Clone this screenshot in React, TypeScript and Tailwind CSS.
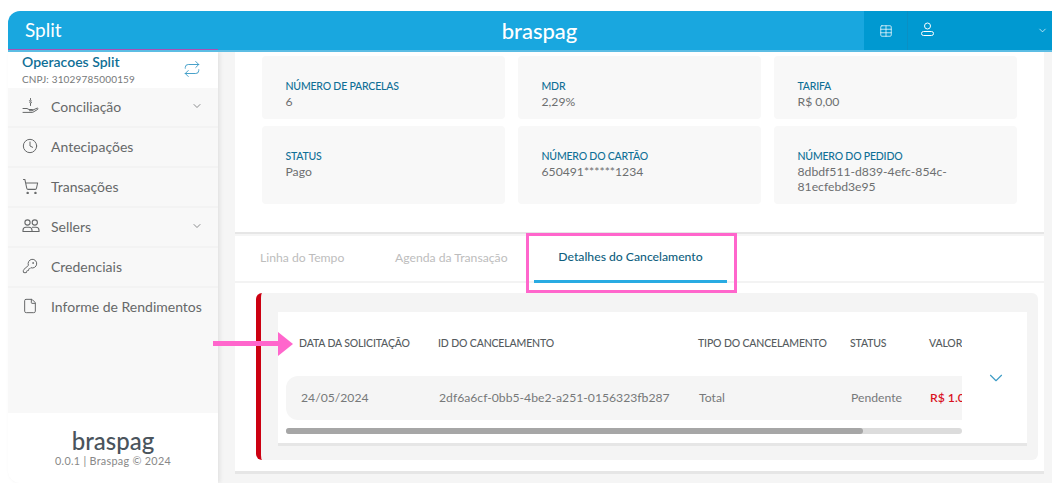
import { ChevronDown, Clock, File, Repeat, ShoppingCart, Table, KeyRound } from 'lucide-react';
import type { ReactNode } from 'react';

const font = "font-['Lato','Noto_Sans',sans-serif]";

function HandIcon() {
    return (
        <svg width="18" height="18" viewBox="0 0 18 18" fill="none" stroke="currentColor" strokeWidth="1" strokeLinecap="round" strokeLinejoin="round">
            <path d="M1 11.5h4l2 1h3.5c.8 0 .8 1.2 0 1.2H7.5" />
            <path d="M10.5 13.2l4.5-2c1-.3 1.5.7.7 1.2l-5 3H1" />
            <path d="M8.5 1.5v1M7.5 5.5c0 .6 2 .9 2 0s-2-.8-2-1.700 2-.7 2-.1M8.500 6.500v2" />
        </svg>
    );
}

function PeopleIcon() {
    return (
        <svg width="18" height="18" viewBox="0 0 18 18" fill="none" stroke="currentColor" strokeWidth="1.1">
            <circle cx="5.500" cy="5.500" r="2.600" />
            <circle cx="12.800" cy="5.500" r="2.600" />
            <path d="M1 14.500v-1.200c0-1.700 1.300-3 3-3h3c1.700 0 3 1.300 3 3v1.200z" />
            <path d="M10 10.300h4c1.700 0 3 1.300 3 3v1.200h-7" />
        </svg>
    );
}

function MenuItem({ icon, label, chevron }: { icon: ReactNode; label: string; chevron?: boolean }) {
    return (
        <div className="flex h-10 items-center border-b-2 border-[#f3f3f3] pr-[15px] pb-[2px] pl-[14px] text-[#666869] last:border-transparent">
            <span className="flex w-[29px] shrink-0 items-center">{icon}</span>
            <span className="flex-1 text-[14px] whitespace-nowrap">{label}</span>
            {chevron && <ChevronDown size={12} strokeWidth={1.5} />}
        </div>
    );
}

function Sidebar() {
    return (
        <aside className="relative z-10 flex w-[210px] shrink-0 flex-col rounded-bl-xl bg-[#f8f8f8] shadow-[2px_0_4px_rgba(0,0,0,0.08)]">
            <div className="flex h-[36px] items-center justify-between bg-white pr-[17px] pl-[14px]">
                <div className="-mt-[1px]">
                    <div className="text-[14px] leading-[16px] font-semibold text-[#0f6f96]">Operacoes Split</div>
                    <div className="mt-[3px] text-[10px] leading-[13px] tracking-[0.15px] text-[#77797a]">CNPJ: 31029785000159</div>
                </div>
                <Repeat size={18} strokeWidth={1.25} className="mb-[3px] text-[#3d9cc6]" />
            </div>
            <div>
                <MenuItem icon={<HandIcon />} label="Conciliação" chevron />
                <MenuItem icon={<Clock size={16} strokeWidth={1.5} />} label="Antecipações" />
                <MenuItem icon={<ShoppingCart size={17} strokeWidth={1.5} />} label="Transações" />
                <MenuItem icon={<PeopleIcon />} label="Sellers" chevron />
                <MenuItem icon={<KeyRound size={16} strokeWidth={1.5} />} label="Credenciais" />
                <MenuItem icon={<File size={16} strokeWidth={1.5} />} label="Informe de Rendimentos" />
            </div>
            <div className="flex-1" />
            <div className="flex h-[70px] flex-col items-center rounded-bl-xl bg-white pt-[15px]">
                <div className="text-[24px] leading-[26px] font-medium text-[#4a545c]">braspag</div>
                <div className="text-[10.8px] leading-[13px] tracking-[0.3px] text-[#888]">0.0.1 | Braspag © 2024</div>
            </div>
        </aside>
    );
}

function Tile({ label, value, className }: { label: string; value: string; className: string }) {
    return (
        <div className={`rounded bg-[#f8f8f8] pr-[40px] pl-[23.5px] ${className}`}>
            <div className="text-[10.5px] leading-[14px] font-medium tracking-[-0.2px] text-[#0f6f96]">{label}</div>
            <div className="mt-[1px] text-[12.2px] leading-[15px] text-[#6d6f70]">{value}</div>
        </div>
    );
}

function Header() {
    return (
        <header className="relative z-20 flex h-[41px] shrink-0 items-stretch overflow-hidden rounded-tl-xl border-b-[2px] border-[#5cbde4] bg-[#19a7df] text-white">
            <div className="-mb-[2px] flex w-[210px] items-center border-b-[3px] border-[#a84fb5] pl-[17px] text-[19px]">Split</div>
            <div className="flex flex-1 items-center justify-center">
                <span className="ml-[-3px] text-[22px] font-medium">braspag</span>
            </div>
            <div className="flex w-[188px] bg-[#0099d1]">
                <div className="flex w-[44px] items-center justify-center border-r border-[#0a90c4]">
                    <Table size={14} strokeWidth={1.25} />
                </div>
                <div className="flex flex-1 items-center pb-[2px] pl-[12px]">
                    <svg width="15" height="15" viewBox="0 0 15 15" fill="none" stroke="currentColor" strokeWidth="1">
                        <circle cx="7.500" cy="4" r="3" />
                        <rect x="1.500" y="9.500" width="12" height="4" rx="2" />
                    </svg>
                </div>
                <div className="flex w-[20px] items-center justify-center">
                    <ChevronDown size={11} strokeWidth={1.5} />
                </div>
            </div>
        </header>
    );
}

function Tabs() {
    return (
        <div className="flex h-[47px] items-stretch border-b-2 border-[#f3f3f3] text-[12.2px]">
            <div className="ml-[25px] flex w-[135px] items-center text-[#bdbdbd]">Linha do Tempo</div>
            <div className="flex w-[139px] items-center text-[#bdbdbd]">Agenda da Transação</div>
            <div className="-mb-[2px] flex w-[193px] items-center justify-center border-b-[3px] border-[#29abe2] pb-[2px] font-medium text-[#0f5f80]">
                Detalhes do Cancelamento
            </div>
        </div>
    );
}

function CancelTable() {
    return (
        <div className="flex h-[131px] bg-white pl-[8px] shadow-[0_3px_0_#e6e6e6]">
            <div className="w-[676px] shrink-0 overflow-hidden">
                <div className="w-[900px]">
                    <div className="flex h-[64px] items-end pb-[26px] text-[10.5px] leading-[13px] font-medium tracking-[-0.15px] text-[#555b5e]">
                        <span className="ml-[13px] w-[139px]">DATA DA SOLICITAÇÃO</span>
                        <span className="w-[260px]">ID DO CANCELAMENTO</span>
                        <span className="w-[152px]">TIPO DO CANCELAMENTO</span>
                        <span className="w-[79px]">STATUS</span>
                        <span>VALOR</span>
                    </div>
                    <div className="flex h-[44px] items-center rounded-l-xl bg-[#f5f5f5] text-[12.2px] text-[#77797a]">
                        <span className="ml-[15px] w-[138px]">24/05/2024</span>
                        <span className="w-[260px]">2df6a6cf-0bb5-4be2-a251-0156323fb287</span>
                        <span className="w-[152px]">Total</span>
                        <span className="w-[79px]">Pendente</span>
                        <span className="font-semibold text-[#d9121f]">R$ 1.000,00</span>
                    </div>
                </div>
                <div className="mt-[8px] h-[6px] rounded-full bg-[#dcdcdc]">
                    <div className="h-full w-[577px] rounded-full bg-[#a6a6a6]" />
                </div>
            </div>
            <div className="flex flex-1 justify-start pt-[55px] pl-[23px]">
                <ChevronDown size={22} strokeWidth={1.25} className="text-[#3d9cc6]" />
            </div>
        </div>
    );
}

function Main() {
    return (
        <main className="flex flex-1 flex-col bg-[#f5f5f5] pr-[8px] pl-[17px]">
            <section className="h-[180px] shrink-0 bg-white pt-[4px] pr-[27px] pl-[27px] shadow-[0_2px_0_#e6e6e6]">
                <div className="grid grid-cols-3 gap-x-[13px] gap-y-[7px]">
                    <Tile className="h-[63px] pt-[23px]" label="NÚMERO DE PARCELAS" value="6" />
                    <Tile className="h-[63px] pt-[23px]" label="MDR" value="2,29%" />
                    <Tile className="h-[63px] pt-[23px]" label="TARIFA" value="R$ 0,00" />
                    <Tile className="h-[78px] pt-[23px]" label="STATUS" value="Pago" />
                    <Tile className="h-[78px] pt-[23px]" label="NÚMERO DO CARTÃO" value="650491******1234" />
                    <Tile className="h-[78px] pt-[23px]" label="NÚMERO DO PEDIDO" value="8dbdf511-d839-4efc-854c-81ecfebd3e95" />
                </div>
            </section>
            <section className="mt-[4px] h-[235px] shrink-0 bg-white shadow-[0_3px_0_#e6e6e6]">
                <Tabs />
                <div className="mt-[10px] mr-[6px] ml-[21px] h-[167px] rounded-md border-l-[5px] border-[#cc0011] bg-[#f4f4f4] pt-[19px] pr-[11px] pl-[17px]">
                    <CancelTable />
                </div>
            </section>
        </main>
    );
}

export default function App() {
    return (
        <div className={`relative h-[483px] w-[1064px] overflow-hidden bg-white pt-[11px] pr-[12px] pl-[8px] ${font}`}>
            <Header />
            <div className="flex h-[431px]">
                <Sidebar />
                <Main />
            </div>
            {/* annotations on top of the screenshot */}
            <div className="absolute top-[233px] left-[526px] z-30 h-[60px] w-[211px] border-[3px] border-[#ff66cc]" />
            <svg className="absolute top-[332px] left-[213px] z-30" width="80" height="24" viewBox="0 0 80 24">
                <rect x="0" y="9" width="66" height="5" fill="#ff66cc" />
                <path d="M65 0l15 12-15 12z" fill="#ff66cc" />
            </svg>
        </div>
    );
}
